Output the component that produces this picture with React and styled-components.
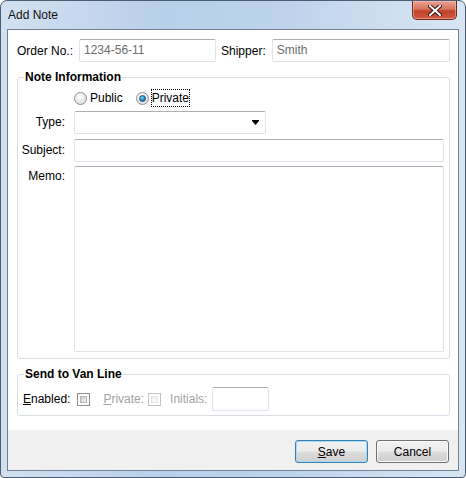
import React from 'react'
import styled, { createGlobalStyle } from 'styled-components'

const GlobalStyle = createGlobalStyle`
    html, body {
        margin: 0;
        padding: 0;
        background: #ffffff;
    }
    * {
        box-sizing: border-box;
    }
`

const Window = styled.div`
    width: 466px;
    height: 478px;
    border: 1px solid #4d5d73;
    border-radius: 7px 7px 4px 4px;
    background: linear-gradient(90deg, #d2e1f1 0%, #b8cfe9 35%, #bcd3eb 60%, #cfdff0 85%, #d8e5f3 100%);
    padding: 0 6px 6px 6px;
    display: flex;
    flex-direction: column;
    font-family: "Liberation Sans", Arial, sans-serif;
    font-size: 12px;
    color: #000;
`

const TitleBar = styled.div`
    height: 28px;
    display: flex;
    justify-content: space-between;
    align-items: flex-start;
    padding-left: 1px;
`

const Title = styled.div`
    line-height: 29px;
    font-size: 12px;
    color: #111;
`

const CloseButton = styled.div`
    width: 45px;
    height: 19px;
    margin-right: 2px;
    border: 1px solid #6e2a20;
    border-top: none;
    border-radius: 0 0 5px 5px;
    background: linear-gradient(180deg, #e8a293 0%, #d8735f 45%, #c1422a 55%, #cf5a3f 100%);
    box-shadow: inset 0 0 0 1px rgba(255, 200, 190, 0.5);
    display: flex;
    align-items: center;
    justify-content: center;
`

const Client = styled.div`
    height: 442px;
    border: 1px solid #71819a;
    background: #ffffff;
    display: flex;
    flex-direction: column;
`

const Body = styled.div`
    flex: 1;
    padding: 9px 8px 0 9px;
`

const TopRow = styled.div`
    display: flex;
    align-items: center;
    height: 23px;
`

const Label = styled.span`
    white-space: nowrap;
    color: ${p => (p.$disabled ? '#a3a3a3' : '#000')};
    margin-left: ${p => p.$ml || 0}px;
    margin-right: ${p => p.$mr || 0}px;
`

const TextInput = styled.div`
    height: ${p => p.$h || 23}px;
    width: ${p => (p.$w ? p.$w + 'px' : 'auto')};
    flex: ${p => (p.$w ? 'none' : 1)};
    border: 1px solid #e2e3ea;
    border-top-color: #abadb3;
    border-radius: 2px;
    background: #fff;
    color: #6d6d6d;
    padding-left: 4px;
    line-height: 21px;
`

const GroupBox = styled.fieldset`
    margin: 8px 0 0 0;
    padding: 0 5px ${p => p.$pb}px 0;
    border: 1px solid #d5dfe5;
    border-radius: 3px;
    min-width: 0;
`

const Legend = styled.legend`
    margin-left: 6px;
    padding: 0 1px;
    font-weight: bold;
    line-height: 14px;
    font-size: 12px;
`

const FieldGrid = styled.div`
    display: grid;
    grid-template-columns: 47px 1fr;
    column-gap: 9px;
    align-items: start;
`

const FieldLabel = styled.div`
    text-align: right;
    line-height: 23px;
    margin-top: ${p => p.$mt || 0}px;
    white-space: nowrap;
`

const RadioRow = styled.div`
    grid-column: 2;
    display: flex;
    align-items: center;
    height: 18px;
    margin: 5px 0 4px;
`

const Radio = styled.span`
    width: 13px;
    height: 13px;
    flex: none;
    border-radius: 50%;
    border: 1px solid #8e8f8f;
    background: radial-gradient(circle at 40% 35%, #ffffff 0%, #e6e6e6 60%, #cfcfcf 100%);
    display: inline-flex;
    align-items: center;
    justify-content: center;
    margin-right: 2px;
    &::after {
        content: '';
        width: 7px;
        height: 7px;
        border-radius: 50%;
        display: ${p => (p.$checked ? 'block' : 'none')};
        background: radial-gradient(circle at 40% 35%, #8fe0ff 0%, #1f86c7 55%, #0b4f87 100%);
        border: 1px solid #1c5180;
        box-sizing: border-box;
    }
`

const RadioLabel = styled.span`
    padding: 0;
    line-height: 16px;
    border: 1px dotted ${p => (p.$focus ? '#000' : 'transparent')};
    margin-right: ${p => p.$mr || 0}px;
`

const Select = styled.div`
    width: 192px;
    height: 23px;
    border: 1px solid #e2e3ea;
    border-top-color: #abadb3;
    border-radius: 2px;
    display: flex;
    align-items: center;
    justify-content: flex-end;
    padding-right: 6px;
    margin-bottom: 5px;
`

const SubjectInput = styled(TextInput)`
    margin-bottom: 4px;
`

const Memo = styled.div`
    height: 186px;
    border: 1px solid #e2e3ea;
    border-top-color: #abadb3;
    border-radius: 2px;
`

const VanRow = styled.div`
    display: flex;
    align-items: center;
    padding: 6px 0 0 5px;
`

const Checkbox = styled.span`
    width: 13px;
    height: 13px;
    flex: none;
    border: 1px solid ${p => (p.$disabled ? '#c2c2c2' : '#8e8f8f')};
    background: #fff;
    padding: 2px;
    margin-left: ${p => p.$ml || 0}px;
    margin-right: ${p => p.$mr || 0}px;
    &::after {
        content: '';
        display: block;
        width: 100%;
        height: 100%;
        background: ${p => (p.$disabled
            ? 'linear-gradient(135deg, #f1f1f1, #fafafa)'
            : 'linear-gradient(135deg, #cbcbcb, #f4f4f4)')};
        border: 1px solid ${p => (p.$disabled ? '#e6e6e6' : '#b5b5b5')};
        box-sizing: border-box;
    }
`

const Footer = styled.div`
    height: 40px;
    background: #f0f0f0;
    display: flex;
    justify-content: flex-end;
    gap: 8px;
    padding: 10px 9px 0 0;
`

const Button = styled.div`
    width: 73px;
    height: 23px;
    border: 1px solid ${p => (p.$default ? '#3c7fb1' : '#707070')};
    border-radius: 3px;
    background: linear-gradient(180deg, #f2f2f2 0%, #ebebeb 48%, #dddddd 52%, #cfcfcf 100%);
    box-shadow: ${p => (p.$default ? 'inset 0 0 0 1px #9fdcf7' : 'inset 0 0 0 1px #fcfcfc')};
    display: flex;
    align-items: center;
    justify-content: center;
    color: #000;
    u {
        text-decoration: underline;
    }
`

const App = () => {
    return (
        <>
            <GlobalStyle />
            <Window>
                <TitleBar>
                    <Title>Add Note</Title>
                    <CloseButton>
                        <svg width="14" height="11" viewBox="0 0 14 11">
                            <path d="M2 1 L12 10 M12 1 L2 10" stroke="#3a1410" strokeWidth="4" strokeLinecap="square" />
                            <path d="M2 1 L12 10 M12 1 L2 10" stroke="#ffffff" strokeWidth="2" strokeLinecap="square" />
                        </svg>
                    </CloseButton>
                </TitleBar>
                <Client>
                    <Body>
                        <TopRow>
                            <Label $mr={6}>Order No.:</Label>
                            <TextInput $w={137}>1234-56-11</TextInput>
                            <Label $ml={5} $mr={6}>Shipper:</Label>
                            <TextInput>Smith</TextInput>
                        </TopRow>

                        <GroupBox $pb={6}>
                            <Legend>Note Information</Legend>
                            <FieldGrid>
                                <RadioRow>
                                    <Radio />
                                    <RadioLabel $mr={12}>Public</RadioLabel>
                                    <Radio $checked />
                                    <RadioLabel $focus>Private</RadioLabel>
                                </RadioRow>
                                <FieldLabel>Type:</FieldLabel>
                                <Select>
                                    <svg width="7" height="5" viewBox="0 0 7 5">
                                        <path d="M0 0 H7 V1 L3.5 5 L0 1 Z" fill="#000" />
                                    </svg>
                                </Select>
                                <FieldLabel>Subject:</FieldLabel>
                                <SubjectInput />
                                <FieldLabel $mt={-1}>Memo:</FieldLabel>
                                <Memo />
                            </FieldGrid>
                        </GroupBox>

                        <GroupBox $pb={4}>
                            <Legend>Send to Van Line</Legend>
                            <VanRow>
                                <Label><u>E</u>nabled:</Label>
                                <Checkbox $ml={7} $mr={13} />
                                <Label $disabled><u>P</u>rivate:</Label>
                                <Checkbox $disabled $ml={4} $mr={9} />
                                <Label $disabled $mr={5}>Initials:</Label>
                                <TextInput $w={57} $h={24} />
                            </VanRow>
                        </GroupBox>
                    </Body>
                    <Footer>
                        <Button $default><span><u>S</u>ave</span></Button>
                        <Button>Cancel</Button>
                    </Footer>
                </Client>
            </Window>
        </>
    )
}

export default App
